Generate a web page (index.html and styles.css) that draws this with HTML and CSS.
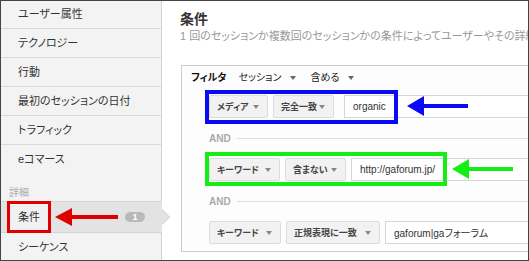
FILE: index.html
```html
<!DOCTYPE html>
<html lang="ja">
<head>
    <meta charset="UTF-8">
    <title>条件 - セグメント</title>
    <link rel="stylesheet" href="styles.css">
</head>
<body>
    <div class="frame">
        <aside class="sidebar">
            <ul class="nav">
                <li class="nav-item">ユーザー属性</li>
                <li class="nav-item">テクノロジー</li>
                <li class="nav-item">行動</li>
                <li class="nav-item">最初のセッションの日付</li>
                <li class="nav-item">トラフィック</li>
                <li class="nav-item nav-item--last">eコマース</li>
            </ul>
            <div class="nav-group">詳細</div>
            <div class="nav-item nav-item--active">
                <span class="mark-red">条件</span>
                <svg class="arrow-red" width="63" height="20" viewBox="0 0 63 20">
                    <polygon points="0,10 17,1 17,19" fill="#e00000"/>
                    <rect x="15" y="8" width="48" height="4" fill="#e00000"/>
                </svg>
                <span class="badge">1</span>
            </div>
            <div class="nav-item">シーケンス</div>
        </aside>

        <main class="content">
            <h1 class="title">条件</h1>
            <p class="desc">1 回のセッションか複数回のセッションかの条件によってユーザーやその詳細</p>

            <div class="filter">
                <div class="filter-head">
                    <b>フィルタ</b>
                    <span class="drop drop--first">セッション<i class="caret"></i></span>
                    <span class="drop">含める<i class="caret"></i></span>
                </div>

                <div class="rule">
                    <span class="select w-59">メディア<i class="caret"></i></span>
                    <span class="select w-61">完全一致<i class="caret"></i></span>
                    <span class="value value--r1">organic</span>
                    <span class="mark mark--blue"></span>
                    <svg class="pointer pointer--blue" width="61" height="20" viewBox="0 0 61 20">
                        <polygon points="0,10 17,0 17,20" fill="#0a0af5"/>
                        <rect x="15" y="8" width="46" height="4" fill="#0a0af5"/>
                    </svg>
                </div>

                <div class="and"><span>AND</span><i></i></div>

                <div class="rule">
                    <span class="select w-71">キーワード<i class="caret"></i></span>
                    <span class="select w-61">含まない<i class="caret"></i></span>
                    <span class="value">http://gaforum.jp/</span>
                    <span class="mark mark--green"></span>
                    <svg class="pointer pointer--green" width="61" height="20" viewBox="0 0 61 20">
                        <polygon points="0,10 17,0 17,20" fill="#14ee14"/>
                        <rect x="15" y="8" width="46" height="4" fill="#14ee14"/>
                    </svg>
                </div>

                <div class="and"><span>AND</span><i></i></div>

                <div class="rule">
                    <span class="select w-72">キーワード<i class="caret"></i></span>
                    <span class="select w-94">正規表現に一致<i class="caret"></i></span>
                    <span class="value">gaforum|gaフォーラム</span>
                </div>
            </div>
        </main>
    </div>
</body>
</html>
```

FILE: styles.css
```css
body {
    margin: 0;
    font-family: "Liberation Sans", "Noto Sans CJK JP", sans-serif;
    font-feature-settings: "palt";
    color: #333;
}
.frame {
    width: 529px;
    height: 261px;
    box-sizing: border-box;
    border: 1px solid #444;
    display: flex;
    overflow: hidden;
    background: #fff;
}

/* sidebar */
.sidebar {
    width: 161px;
    flex-shrink: 0;
    box-sizing: border-box;
    background: #f3f3f3;
    border-right: 1px solid #d3d3d3;
    position: relative;
    z-index: 1;
}
.nav {
    list-style: none;
    margin: -1px 0 0;
    padding: 0;
}
.nav-item {
    height: 29px;
    box-sizing: border-box;
    padding-left: 17px;
    border-bottom: 1px solid #dadada;
    font-size: 11px;
    line-height: 28px;
    color: #333;
}
.nav-item--last {
    border-bottom: none;
}
.nav-group {
    height: 27px;
    box-sizing: border-box;
    padding: 12px 0 0 8px;
    font-size: 10px;
    line-height: 14px;
    color: #aaa;
}
.nav-item--active {
    height: 32px;
    padding-left: 6px;
    margin-right: -1px;
    background: #e3e3e3;
    border-top: 1px solid #d4d4d4;
    border-bottom: 1px solid #d4d4d4;
    display: flex;
    align-items: center;
    position: relative;
}
.nav-item--active::before,
.nav-item--active::after {
    content: "";
    position: absolute;
    top: 50%;
    margin-top: -8px;
    border-top: 8px solid transparent;
    border-bottom: 8px solid transparent;
    border-left: 8px solid #c9c9c9;
    left: 100%;
}
.nav-item--active::after {
    left: calc(100% - 1px);
    border-left-color: #e3e3e3;
}
.mark-red {
    align-self: stretch;
    margin-top: -1px;
    margin-bottom: -1px;
    border: 3px solid #e00000;
    background: #f1f1f1;
    padding: 0 8px;
    display: flex;
    align-items: center;
}
.arrow-red {
    margin-left: 4px;
    display: block;
}
.badge {
    margin-left: 7px;
    width: 20px;
    height: 10px;
    border-radius: 5px;
    background: #b9b9b9;
    color: #fff;
    font-size: 9px;
    font-weight: bold;
    line-height: 10px;
    text-align: center;
}

/* content */
.content {
    flex: 1;
    min-width: 0;
    overflow: hidden;
    padding: 8px 0 0 18px;
}
.title {
    margin: 0;
    font-size: 14px;
    line-height: 20px;
    font-weight: bold;
    color: #333;
}
.desc {
    margin: 0;
    font-size: 11px;
    line-height: 14px;
    color: #999;
    white-space: nowrap;
    overflow: hidden;
}
.filter {
    width: 420px;
    margin: 22px 0 0 1px;
    border: 1px solid #ccc;
    background: #fdfdfd;
    padding: 0 0 7px 27px;
}
.filter-head {
    height: 29px;
    box-sizing: border-box;
    margin-left: -18px;
    padding-top: 5px;
    font-size: 10px;
    line-height: 14px;
    color: #222;
    display: flex;
    align-items: flex-start;
}
.filter-head b {
    color: #111;
}
.drop {
    display: flex;
    align-items: center;
    height: 14px;
    margin-left: 14px;
}
.drop--first {
    margin-left: 12px;
}
.drop .caret {
    margin-left: 9px;
    border-top-color: #666;
}
.caret {
    display: block;
    width: 0;
    height: 0;
    border-left: 3px solid transparent;
    border-right: 3px solid transparent;
    border-top: 4px solid #888;
}

/* rule rows */
.rule {
    height: 23px;
    display: flex;
    gap: 5px;
    position: relative;
}
.select {
    box-sizing: border-box;
    background: #f2f2f2;
    border: 1px solid #dcdcdc;
    border-radius: 2px;
    padding: 0 8px 0 7px;
    display: flex;
    align-items: center;
    justify-content: space-between;
    font-size: 9px;
    font-weight: bold;
    color: #444;
}
.w-59 { width: 59px; }
.w-61 { width: 61px; }
.w-71 { width: 71px; }
.w-72 { width: 72px; }
.w-94 { width: 94px; }
.value {
    flex: 1;
    box-sizing: border-box;
    background: #fff;
    border: 1px solid #d6d6d6;
    padding-left: 8px;
    display: flex;
    align-items: center;
    font-size: 10px;
    color: #333;
}
.value--r1 {
    margin-left: 5px;
}
.and {
    height: 40px;
    display: flex;
    align-items: center;
    font-size: 10px;
    font-weight: bold;
    color: #aaa;
}
.and i {
    flex: 1;
    height: 1px;
    background: #ddd;
    margin-left: 6px;
}

/* annotations */
.mark {
    position: absolute;
    left: -4px;
    top: -5px;
    height: 34px;
    box-sizing: border-box;
    border: 4px solid;
}
.mark--blue {
    width: 193px;
    border-color: #0a0af5;
}
.mark--green {
    width: 242px;
    top: -6px;
    border-color: #14ee14;
}
.pointer {
    position: absolute;
    top: 1px;
}
.pointer--blue {
    left: 198px;
}
.pointer--green {
    left: 243px;
}
```
